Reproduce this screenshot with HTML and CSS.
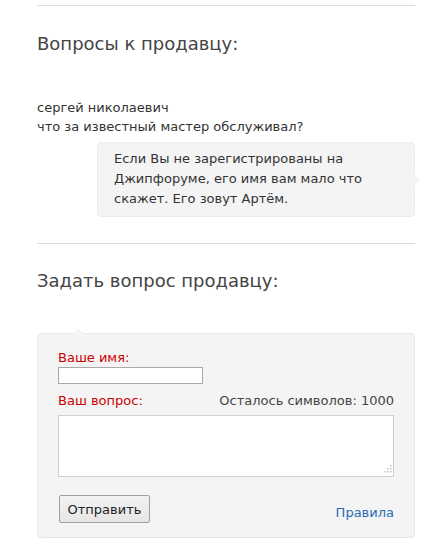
FILE: index.html
```html
<!DOCTYPE html>
<html lang="ru">
<head>
<meta charset="utf-8">
<link rel="stylesheet" href="styles.css">
</head>
<body>
<div class="page">
  <section class="block block-questions">
    <h2 class="title">Вопросы к продавцу:</h2>
    <div class="question">
      <div class="author">сергей николаевич</div>
      <div class="qtext">что за известный мастер обслуживал?</div>
    </div>
    <div class="answer">
      <p>Если Вы не зарегистрированы на Джипфоруме, его имя вам мало что скажет. Его зовут Артём.</p>
    </div>
  </section>
  <section class="block block-ask">
    <h2 class="title">Задать вопрос продавцу:</h2>
    <form class="ask-form">
      <label class="lbl" for="name">Ваше имя:</label>
      <input class="name-input" id="name" type="text">
      <div class="row-q">
        <label class="lbl" for="q">Ваш вопрос:</label>
        <span class="counter">Осталось символов: 1000</span>
      </div>
      <div class="q-wrap">
        <textarea class="q-input" id="q"></textarea>
        <svg class="grip" width="10" height="10" viewBox="0 0 10 10" aria-hidden="true">
          <rect x="8" y="0" width="1.5" height="1.5" fill="#c4c4c4"/>
          <rect x="5" y="3" width="1.5" height="1.5" fill="#c4c4c4"/>
          <rect x="8" y="3" width="1.5" height="1.5" fill="#c4c4c4"/>
          <rect x="2" y="6" width="1.5" height="1.5" fill="#c4c4c4"/>
          <rect x="5" y="6" width="1.5" height="1.5" fill="#c4c4c4"/>
          <rect x="8" y="6" width="1.5" height="1.5" fill="#c4c4c4"/>
        </svg>
      </div>
      <div class="row-actions">
        <button class="btn" type="button">Отправить</button>
        <a class="rules" href="#">Правила</a>
      </div>
    </form>
  </section>
</div>
</body>
</html>
```

FILE: styles.css
```css
html, body {
  margin: 0;
  padding: 0;
  background: #fff;
}
body {
  font-family: "DejaVu Sans", Verdana, sans-serif;
  font-size: 13px;
  color: #333;
}
.page {
  width: 378px;
  margin-left: 37px;
}
.block {
  border-top: 1px solid #dcdcdc;
}
.block-questions {
  margin-top: 5px;
  padding-bottom: 26px;
}
.title {
  margin: 0;
  font-size: 18px;
  font-weight: normal;
  color: #444;
  line-height: 24px;
}
.block-questions .title {
  margin-top: 26px;
}
.question {
  margin-top: 42px;
  line-height: 19px;
}
.answer {
  position: relative;
  margin: 6px 0 0 60px;
  background: #f4f4f4;
  border: 1px solid #ececec;
  border-radius: 4px;
  padding: 6px 16px 7px;
  line-height: 20px;
}
.answer p {
  margin: 0;
}
.answer::after {
  content: "";
  position: absolute;
  right: -6px;
  top: 31px;
  border-left: 6px solid #f4f4f4;
  border-top: 6px solid transparent;
  border-bottom: 6px solid transparent;
}
.block-ask .title {
  margin-top: 25px;
}
.ask-form {
  position: relative;
  margin-top: 40px;
  background: #f4f4f4;
  border: 1px solid #e8e8e8;
  border-radius: 4px;
  padding: 15px 20px 14px;
  display: flex;
  flex-direction: column;
}
.ask-form::before {
  content: "";
  position: absolute;
  left: 34px;
  top: -6px;
  border-bottom: 6px solid #f4f4f4;
  border-left: 6px solid transparent;
  border-right: 6px solid transparent;
}
.lbl {
  color: #cc0000;
  line-height: 18px;
}
.name-input {
  width: 145px;
  height: 17px;
  box-sizing: border-box;
  border: 1px solid #a9a9a9;
  background: #fff;
  padding: 0 2px;
  margin: 0;
}
.row-q {
  display: flex;
  justify-content: space-between;
  margin-top: 8px;
  line-height: 18px;
}
.counter {
  color: #444;
}
.q-wrap {
  position: relative;
  margin-top: 5px;
  display: flex;
}
.q-input {
  flex: 1;
  margin: 0;
  height: 62px;
  box-sizing: border-box;
  border: 1px solid #cfcfcf;
  background: #fff;
  resize: none;
  font: inherit;
}
.grip {
  position: absolute;
  right: 2px;
  bottom: 2px;
}
.row-actions {
  display: flex;
  justify-content: space-between;
  align-items: flex-end;
  margin-top: 18px;
}
.btn {
  font-family: "DejaVu Sans", Verdana, sans-serif;
  font-size: 13px;
  color: #222;
  width: 91px;
  height: 28px;
  margin-left: 1px;
  background: linear-gradient(#f2f2f2, #e6e6e6);
  border: 1px solid #a0a0a0;
  border-radius: 2px;
  padding: 0;
}
.rules {
  color: #2b6cb5;
  text-decoration: none;
  line-height: 18px;
  margin-bottom: 1px;
}
```
